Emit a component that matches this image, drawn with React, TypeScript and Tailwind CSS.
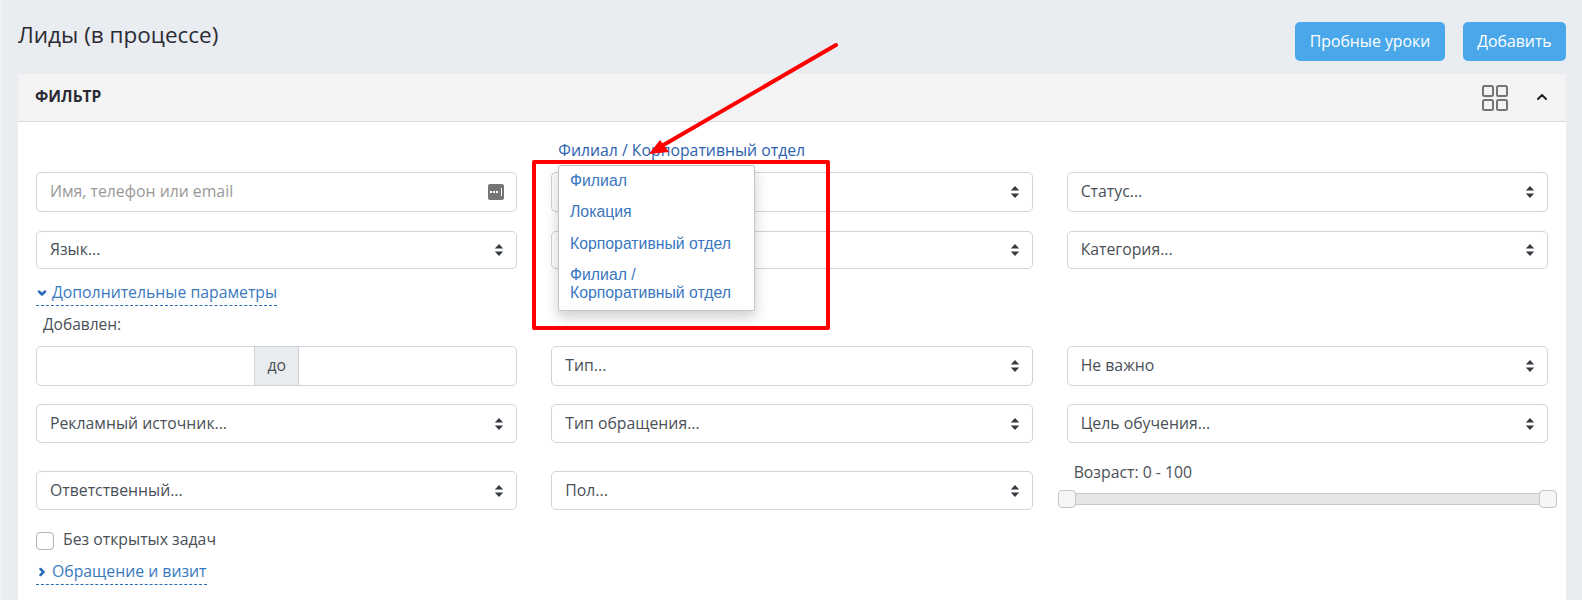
import { ChevronDown, ChevronRight, ChevronUp } from 'lucide-react';

const font = "font-['Open_Sans',sans-serif]";

function SortArrows() {
    return (
        <svg width="10" height="14" viewBox="0 0 10 14" className="shrink-0 text-[#343a40]">
            <path d="M5 1 9.2 5.6H.8z M5 13 .8 8.4h8.4z" fill="currentColor" />
        </svg>
    );
}

function FakeSelect({ label, h = 'h-[39px]' }: { label?: string; h?: string }) {
    return (
        <div className={`${h} flex items-center justify-between pl-[13px] pr-[12px] bg-white border border-[#ced4da] rounded-[5px] text-[15.8px] text-[#495057]`}>
            <span>{label}</span>
            <SortArrows />
        </div>
    );
}

function DottedLink({ label, open }: { label: string; open?: boolean }) {
    return (
        <div className="inline-flex items-center gap-[4px] h-[25px] border-b border-dashed border-[#2b6cb8] text-[15.8px] text-[#3a7abf]">
            {open
                ? <ChevronDown className="w-[12px] h-[12px] text-[#2b6cb8]" strokeWidth={5} />
                : <ChevronRight className="w-[12px] h-[12px] text-[#2b6cb8]" strokeWidth={5} />}
            <span>{label}</span>
        </div>
    );
}

function GridIcon() {
    return (
        <svg width="26" height="26" viewBox="0 0 26 26" fill="none" stroke="#757575" strokeWidth="2">
            <rect x="1" y="1" width="10" height="10" rx="1.5" />
            <rect x="15" y="1" width="10" height="10" rx="1.5" />
            <rect x="1" y="15" width="10" height="10" rx="1.5" />
            <rect x="15" y="15" width="10" height="10" rx="1.5" />
        </svg>
    );
}

export default function App() {
    return (
        <div className={`${font} relative h-[600px] w-[1582px] overflow-hidden bg-[#e9ecf1] border-l-2 border-[#f0f1f3] pl-[16px] pr-[16px]`}>
            {/* top bar */}
            <div className="h-[74px] flex items-start justify-between">
                <h1 className="mt-[18px] text-[22.5px] leading-[34px] text-[#2b2b33]">Лиды (в процессе)</h1>
                <div className="flex gap-[18px] mt-[22px]">
                    <button className="h-[39px] w-[150px] rounded-[5px] bg-[#4aa8ea] text-white text-[15.8px]">Пробные уроки</button>
                    <button className="h-[39px] w-[103px] rounded-[5px] bg-[#4aa8ea] text-white text-[15.8px]">Добавить</button>
                </div>
            </div>

            {/* filter card */}
            <div className="bg-white h-[526px]">
                <div className="h-[48px] bg-[#f4f4f5] border-b border-[#dcdcdc] flex items-center justify-between pl-[17px] pr-[16px]">
                    <span className="-mt-[2px] text-[15.5px] font-bold text-[#2b2b33]">ФИЛЬТР</span>
                    <div className="flex items-center gap-[26px]">
                        <GridIcon />
                        <ChevronUp className="w-[16px] h-[16px] text-[#222] -mt-[2px]" strokeWidth={3} />
                    </div>
                </div>

                <div className="px-[18px] text-[15.8px] text-[#495057]">
                    <div className="grid grid-cols-3 gap-x-[34px] h-[50px]">
                        <div />
                        <div className="relative">
                            <span className="absolute left-[7px] top-[17px] leading-[22px] text-[#2a62b0] whitespace-nowrap">Филиал / Корпоративный отдел</span>
                        </div>
                        <div />
                    </div>

                    <div className="grid grid-cols-3 gap-x-[34px] gap-y-[19px]">
                        <div className="h-[40px] flex items-center justify-between pl-[13px] pr-[12px] border border-[#ced4da] rounded-[5px]">
                            <span className="text-[#999]">Имя, телефон или email</span>
                            <div className="w-[16px] h-[16px] rounded-[2px] bg-[#757575] flex items-center gap-[1px] pl-[2px]">
                                <span className="w-[2px] h-[2px] bg-white" />
                                <span className="w-[2px] h-[2px] bg-white" />
                                <span className="w-[2px] h-[2px] bg-white" />
                                <span className="w-[1px] h-[8px] ml-[2px] bg-white" />
                            </div>
                        </div>
                        <FakeSelect h="h-[40px]" />
                        <FakeSelect label="Статус..." h="h-[40px]" />
                        <FakeSelect label="Язык..." h="h-[38px]" />
                        <FakeSelect h="h-[38px]" />
                        <FakeSelect label="Категория..." h="h-[38px]" />
                    </div>

                    <div className="mt-[12px] h-[25px]">
                        <DottedLink label="Дополнительные параметры" open />
                    </div>
                    <div className="h-[40px] pl-[7px] pt-[7px] leading-[22px] text-[15.5px]">Добавлен:</div>

                    <div className="grid grid-cols-3 gap-x-[34px]">
                        <div className="h-[40px] flex border border-[#ced4da] rounded-[5px] overflow-hidden">
                            <div className="flex-1" />
                            <div className="w-[45px] flex items-center justify-center bg-[#e9ecef] border-x border-[#ced4da]">до</div>
                            <div className="flex-1" />
                        </div>
                        <FakeSelect label="Тип..." h="h-[40px]" />
                        <FakeSelect label="Не важно" h="h-[40px]" />
                    </div>
                    <div className="grid grid-cols-3 gap-x-[34px] mt-[18px]">
                        <FakeSelect label="Рекламный источник..." />
                        <FakeSelect label="Тип обращения..." />
                        <FakeSelect label="Цель обучения..." />
                    </div>
                    <div className="grid grid-cols-3 gap-x-[34px] mt-[28px]">
                        <FakeSelect label="Ответственный..." />
                        <FakeSelect label="Пол..." />
                        {/* age slider */}
                        <div className="-mx-[9px] -mt-[10px]">
                            <div className="pl-[16px] leading-[22px]">Возраст: 0 - 100</div>
                            <div className="relative mt-[7px] h-[18px] flex items-center">
                                <div className="w-full h-[12px] bg-[#e6e6e6] border border-[#c8c8c8]" />
                                <div className="absolute left-0 top-0 w-[18px] h-[18px] bg-[#f6f6f6] border border-[#c5c5c5] rounded-[4px]" />
                                <div className="absolute right-0 top-0 w-[18px] h-[18px] bg-[#f6f6f6] border border-[#c5c5c5] rounded-[4px]" />
                            </div>
                        </div>
                    </div>

                    <div className="mt-[20px] flex items-center gap-[9px] h-[20px]">
                        <div className="w-[18px] h-[18px] mt-[2px] bg-white border border-[#adb5bd] rounded-[4px]" />
                        <span className="-mt-[1px]">Без открытых задач</span>
                    </div>
                    <div className="mt-[10px]">
                        <DottedLink label="Обращение и визит" />
                    </div>
                </div>
            </div>

            {/* branch dropdown */}
            <div className="absolute left-[556px] top-[165px] w-[197px] h-[146px] bg-white border border-[#c4c4c4] rounded-[2px] shadow-[0_6px_14px_rgba(0,0,0,0.2)] pl-[11px] font-['Liberation_Sans',sans-serif] text-[15.8px] text-[#3a77c0]">
                <div className="h-[32px] pt-[4px] leading-[21px]">Филиал</div>
                <div className="h-[32px] pt-[3px] leading-[21px]">Локация</div>
                <div className="h-[32px] pt-[3px] leading-[21px]">Корпоративный отдел</div>
                <div className="pt-[4px] leading-[18px]">Филиал /<br />Корпоративный отдел</div>
            </div>

            {/* red annotation */}
            <div className="absolute left-[530px] top-[160px] w-[298px] h-[170px] border-[4px] border-[#ff0000] rounded-[2px]" />
            <svg className="absolute left-[-2px] top-0" width="1582" height="600" fill="none">
                <path d="M836 45 660 147" stroke="#ff0000" strokeWidth="4" strokeLinecap="round" />
                <path d="M649 154 660 140 669 152z" fill="#ff0000" />
            </svg>
        </div>
    );
}
